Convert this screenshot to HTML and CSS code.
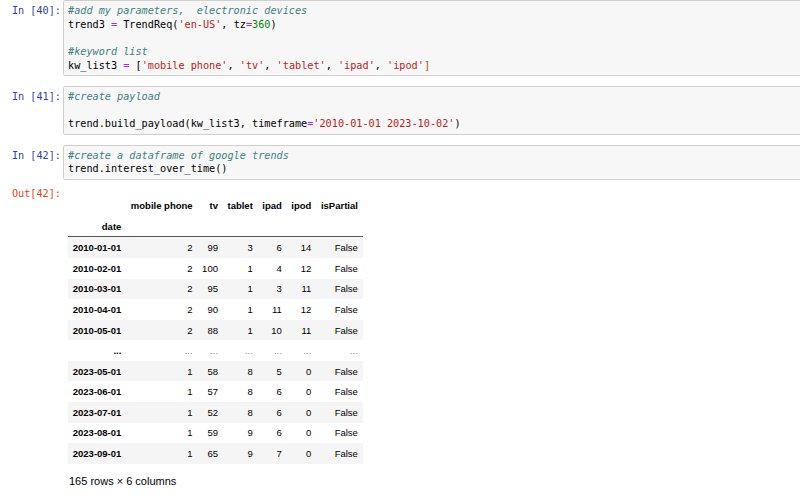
FILE: index.html
```
<!DOCTYPE html>
<html>
<head>
<meta charset="utf-8">
<link rel="stylesheet" href="styles.css">
</head>
<body>
<div class="notebook">
  <div class="cell">
    <div class="prompt in">In&nbsp;[40]:</div>
    <div class="input"><pre class="code"><span class="c">#add my parameters,  electronic devices</span>
trend3 <span class="o">=</span> TrendReq(<span class="s">'en-US'</span>, tz<span class="o">=</span><span class="n">360</span>)

<span class="c">#keyword list</span>
kw_list3 <span class="o">=</span> [<span class="s">'mobile phone'</span>, <span class="s">'tv'</span>, <span class="s">'tablet'</span>, <span class="s">'ipad'</span>, <span class="s">'ipod'</span><span class="b">]</span></pre></div>
  </div>
  <div class="cell">
    <div class="prompt in">In&nbsp;[41]:</div>
    <div class="input"><pre class="code"><span class="c">#create payload</span>

trend.build_payload(kw_list3, timeframe<span class="o">=</span><span class="s">'2010-01-01 2023-10-02'</span>)</pre></div>
  </div>
  <div class="cell">
    <div class="prompt in">In&nbsp;[42]:</div>
    <div class="input"><pre class="code"><span class="c">#create a dataframe of google trends</span>
trend.interest_over_time()</pre></div>
  </div>
  <div class="output">
    <div class="prompt out">Out[42]:</div>
    <div class="result">
      <table class="df">
        <thead>
          <tr><th></th><th>mobile phone</th><th>tv</th><th>tablet</th><th>ipad</th><th>ipod</th><th>isPartial</th></tr>
          <tr><th>date</th><th></th><th></th><th></th><th></th><th></th><th></th></tr>
        </thead>
        <tbody>
          <tr><th>2010-01-01</th><td>2</td><td>99</td><td>3</td><td>6</td><td>14</td><td>False</td></tr>
          <tr><th>2010-02-01</th><td>2</td><td>100</td><td>1</td><td>4</td><td>12</td><td>False</td></tr>
          <tr><th>2010-03-01</th><td>2</td><td>95</td><td>1</td><td>3</td><td>11</td><td>False</td></tr>
          <tr><th>2010-04-01</th><td>2</td><td>90</td><td>1</td><td>11</td><td>12</td><td>False</td></tr>
          <tr><th>2010-05-01</th><td>2</td><td>88</td><td>1</td><td>10</td><td>11</td><td>False</td></tr>
          <tr class="ell"><th>...</th><td>...</td><td>...</td><td>...</td><td>...</td><td>...</td><td>...</td></tr>
          <tr><th>2023-05-01</th><td>1</td><td>58</td><td>8</td><td>5</td><td>0</td><td>False</td></tr>
          <tr><th>2023-06-01</th><td>1</td><td>57</td><td>8</td><td>6</td><td>0</td><td>False</td></tr>
          <tr><th>2023-07-01</th><td>1</td><td>52</td><td>8</td><td>6</td><td>0</td><td>False</td></tr>
          <tr><th>2023-08-01</th><td>1</td><td>59</td><td>9</td><td>6</td><td>0</td><td>False</td></tr>
          <tr><th>2023-09-01</th><td>1</td><td>65</td><td>9</td><td>7</td><td>0</td><td>False</td></tr>
        </tbody>
      </table>
      <p class="shape">165 rows × 6 columns</p>
    </div>
  </div>
</div>
</body>
</html>
```

FILE: styles.css
```
html, body {
  margin: 0;
  padding: 0;
  background: #fff;
}
.notebook {
  width: 800px;
  height: 500px;
  overflow: hidden;
}
.cell {
  display: flex;
  margin-bottom: 9.6px;
}
.prompt {
  flex: 0 0 61px;
  text-align: right;
  font-family: "DejaVu Sans Mono", monospace;
  font-size: 10.2px;
  line-height: 13.6px;
  padding-top: 4.2px;
  white-space: nowrap;
}
.prompt.in {
  color: #303F9F;
}
.prompt.out {
  color: #D84315;
  padding-top: 0;
}
.input {
  flex: 1;
  margin-left: 2px;
  margin-right: -6px;
  background: #f7f7f7;
  border: 1px solid #cfcfcf;
  border-radius: 2px;
  padding: 3.2px 4px;
}
.code {
  margin: 0;
  font-family: "DejaVu Sans Mono", monospace;
  font-size: 10.2px;
  line-height: 13.6px;
  color: #000;
  white-space: pre;
}
.code .c { color: #408080; font-style: italic; }
.code .s { color: #BA2121; }
.code .n { color: #008800; }
.code .o { color: #AA22FF; }
.code .b { color: #7a5c10; }

.output {
  display: flex;
  margin-top: -2.8px;
}
.result {
  margin-left: 2px;
  padding: 7.5px 0 0 5px;
}
.df {
  border-collapse: collapse;
  border-spacing: 0;
  font-family: "Liberation Sans", Arial, sans-serif;
  font-size: 9.5px;
  color: #000;
}
.df th, .df td {
  text-align: right;
  vertical-align: middle;
  padding: 4.8px 4.75px;
  line-height: normal;
  white-space: nowrap;
}
.df th {
  font-weight: bold;
}
.df thead {
  border-bottom: 1.5px solid #555;
}
.df thead tr:first-child th {
  padding-top: 5.4px;
}
.df tbody tr:nth-child(odd) {
  background: #f5f5f5;
}
.df .ell td {
  color: #888;
}
.shape {
  margin: 11.2px 0 0 1px;
  font-family: "Liberation Sans", Arial, sans-serif;
  font-size: 11px;
  color: #000;
}
```
